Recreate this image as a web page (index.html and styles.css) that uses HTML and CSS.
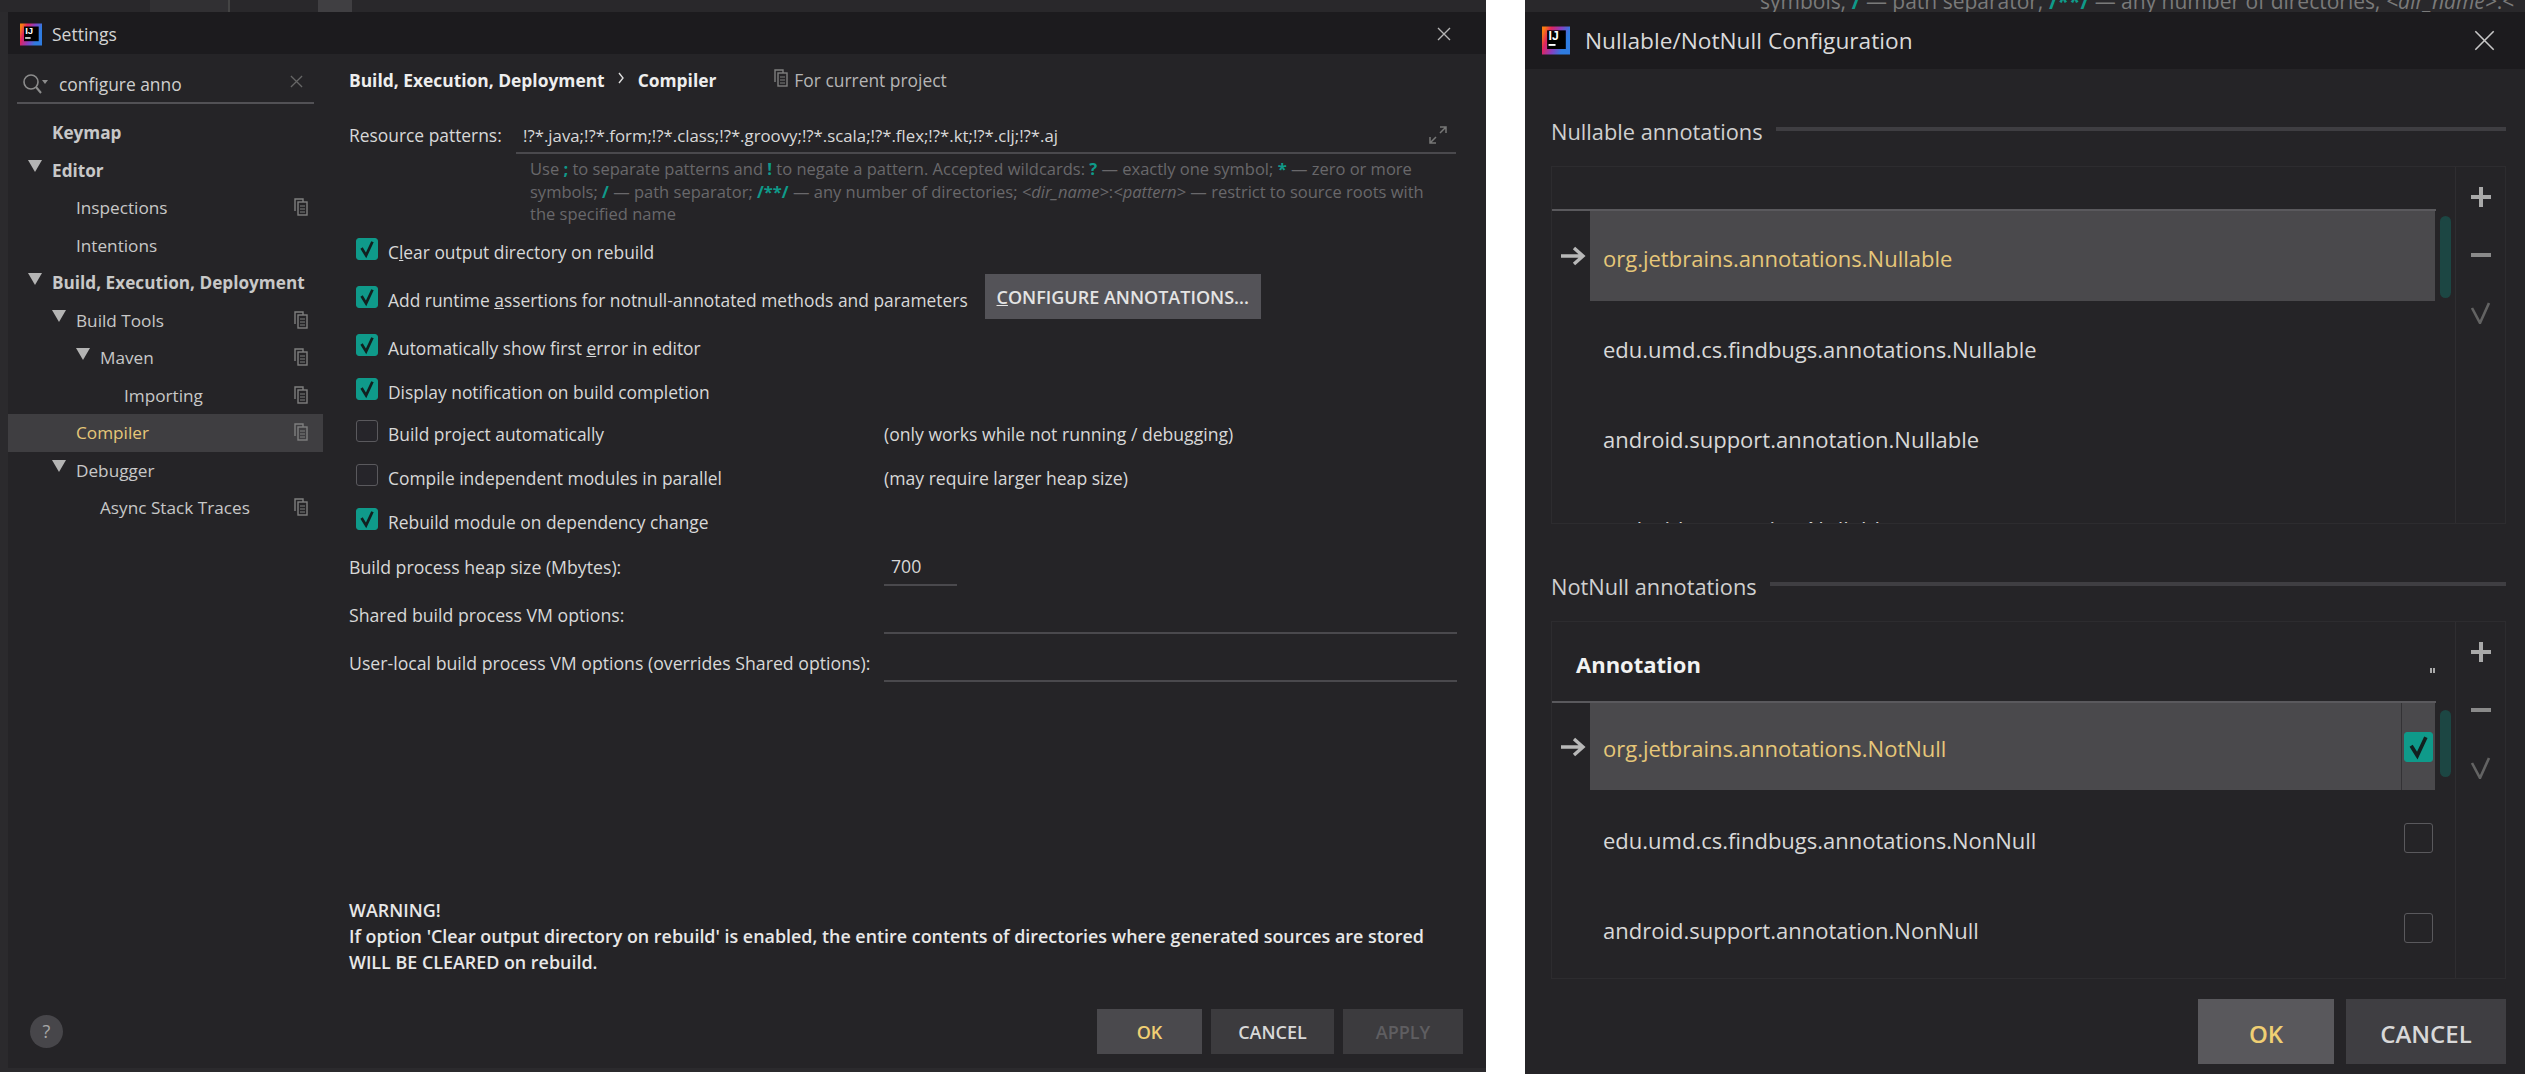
FILE: index.html
```html
<!DOCTYPE html>
<html>
  <head>
    <title>Settings</title>
    <link rel="stylesheet" href="styles.css">
  </head>
  <body>
    <svg class="defs" width="0" height="0">
      <defs>
        <linearGradient id="ijGrad" x1="0" y1="0.3" x2="1" y2="0.7">
          <stop offset="0" stop-color="#f97a12" />
          <stop offset="0.2" stop-color="#e0245e" />
          <stop offset="0.5" stop-color="#8a3fc0" />
          <stop offset="0.8" stop-color="#2f7ce0" />
        </linearGradient>
        <symbol id="ij" viewBox="0 0 24 24">
          <rect width="24" height="24" fill="url(#ijGrad)" />
          <rect x="4.4" y="3.3" width="16" height="16" fill="#000" />
          <text x="5.6" y="11.4" font-family="Liberation Sans" font-weight="bold" font-size="10.5" fill="#fff">IJ</text>
          <rect x="5.6" y="15" width="6" height="1.6" fill="#fff" />
        </symbol>
        <symbol id="copy" viewBox="0 0 14 18">
          <path d="M1 13V1h8v3" fill="none" stroke="#7f7f7f" stroke-width="1.4" />
          <rect x="4" y="4" width="9" height="13" fill="none" stroke="#7f7f7f" stroke-width="1.4" />
          <path d="M6 8h5M6 11h5M6 14h5" stroke="#7f7f7f" stroke-width="1.2" />
        </symbol>
        <symbol id="tri" viewBox="0 0 14 12">
          <path d="M0 0h14L7 12z" fill="#b4b4b4" />
        </symbol>
        <symbol id="arrow" viewBox="0 0 26 20">
          <path d="M1 10h21M14 2l9 8-9 8" fill="none" stroke="#b8b8b8" stroke-width="3.4" />
        </symbol>
        <symbol id="tick" viewBox="0 0 22 22">
          <path d="M5 10l5 8 7-15" fill="none" stroke="#12201f" stroke-width="3" />
        </symbol>
      </defs>
    </svg>

    <div class="window settings">
      <div class="behind behind-left"><span class="seg seg-a"></span><span class="seg seg-b"></span></div>
      <div class="titlebar">
        <svg class="logo"><use href="#ij" /></svg>
        <span class="title-text">Settings</span>
        <svg class="close" viewBox="0 0 16 16"><path d="M2 2l12 12M14 2L2 14" stroke="#b5b5b5" stroke-width="1.4" /></svg>
      </div>

      <div class="settings-body">
        <div class="sidebar">
          <div class="search">
            <svg class="search-icon" viewBox="0 0 26 22">
              <circle cx="9" cy="9" r="7" fill="none" stroke="#8c8c8c" stroke-width="1.6" />
              <path d="M14 14l5 6" stroke="#8c8c8c" stroke-width="2" />
              <path d="M20 7h6l-3 4z" fill="#8c8c8c" />
            </svg>
            <span class="search-text">configure anno</span>
            <svg class="search-clear" viewBox="0 0 14 14"><path d="M1 1l12 12M13 1L1 13" stroke="#666" stroke-width="1.4" /></svg>
          </div>
          <ul class="tree">
            <li class="node lvl1 strong">Keymap</li>
            <li class="node lvl1 strong"><svg class="tri"><use href="#tri" /></svg>Editor</li>
            <li class="node lvl2">Inspections<svg class="copy"><use href="#copy" /></svg></li>
            <li class="node lvl2">Intentions</li>
            <li class="node lvl1 strong"><svg class="tri"><use href="#tri" /></svg>Build, Execution, Deployment</li>
            <li class="node lvl2"><svg class="tri"><use href="#tri" /></svg>Build Tools<svg class="copy"><use href="#copy" /></svg></li>
            <li class="node lvl3"><svg class="tri"><use href="#tri" /></svg>Maven<svg class="copy"><use href="#copy" /></svg></li>
            <li class="node lvl4">Importing<svg class="copy"><use href="#copy" /></svg></li>
            <li class="node lvl2 active">Compiler<svg class="copy"><use href="#copy" /></svg></li>
            <li class="node lvl2"><svg class="tri"><use href="#tri" /></svg>Debugger</li>
            <li class="node lvl3">Async Stack Traces<svg class="copy"><use href="#copy" /></svg></li>
          </ul>
        </div>

        <div class="main">
          <div class="crumbs">
            <b>Build, Execution, Deployment</b>
            <svg class="chevron" viewBox="0 0 8 12"><path d="M2 1l4 5-4 5" fill="none" stroke="#ddd" stroke-width="1.4" /></svg>
            <b>Compiler</b>
            <svg class="copy crumb-copy"><use href="#copy" /></svg>
            <span class="scope">For current project</span>
          </div>

          <div class="resource">
            <span class="resource-label">Resource patterns:</span>
            <div class="resource-input">
              <span>!?*.java;!?*.form;!?*.class;!?*.groovy;!?*.scala;!?*.flex;!?*.kt;!?*.clj;!?*.aj</span>
              <svg class="expand" viewBox="0 0 18 18">
                <path d="M11 1h6v6M17 1l-6 6" fill="none" stroke="#777" stroke-width="1.5" />
                <path d="M1 11v6h6M1 17l6-6" fill="none" stroke="#777" stroke-width="1.5" />
              </svg>
            </div>
          </div>
          <p class="hint">
            Use <em class="key">;</em> to separate patterns and <em class="key">!</em> to negate a pattern. Accepted wildcards: <em class="key">?</em> — exactly one symbol; <em class="key">*</em> — zero or more symbols; <em class="key">/</em> — path separator; <em class="key">/**/</em> — any number of directories; <i>&lt;dir_name&gt;</i>:<i>&lt;pattern&gt;</i> — restrict to source roots with the specified name
          </p>

          <div class="checks">
            <label class="check h48 wide"><span class="box on"><svg><use href="#tick" /></svg></span><span>C<u>l</u>ear output directory on rebuild</span></label>
            <div class="check h48 wide">
              <span class="box on"><svg><use href="#tick" /></svg></span>
              <span>Add runtime <u>a</u>ssertions for notnull-annotated methods and parameters</span>
              <button class="btn configure"><u>C</u>ONFIGURE ANNOTATIONS...</button>
            </div>
            <label class="check h44 wide"><span class="box on"><svg><use href="#tick" /></svg></span><span>Automatically show first <u>e</u>rror in editor</span></label>
            <label class="check h42 wide"><span class="box on"><svg><use href="#tick" /></svg></span><span>Display notification on build completion</span></label>
            <label class="check h44"><span class="box"></span><span>Build project automatically</span></label>
            <span class="note h44">(only works while not running / debugging)</span>
            <label class="check h44"><span class="box"></span><span>Compile independent modules in parallel</span></label>
            <span class="note h44">(may require larger heap size)</span>
            <label class="check wide"><span class="box on"><svg><use href="#tick" /></svg></span><span>Rebuild module on dependency change</span></label>
          </div>

          <div class="form">
            <span class="form-label">Build process heap size (Mbytes):</span>
            <div class="field small">700</div>
            <span class="form-label">Shared build process VM options:</span>
            <div class="field"></div>
            <span class="form-label">User-local build process VM options (overrides Shared options):</span>
            <div class="field"></div>
          </div>

          <div class="warning">
            WARNING!<br />
            If option 'Clear output directory on rebuild' is enabled, the entire contents of directories where generated sources are stored<br />
            WILL BE CLEARED on rebuild.
          </div>
        </div>
      </div>

      <div class="footer">
        <span class="help">?</span>
        <div class="footer-btns">
          <button class="btn ok">OK</button>
          <button class="btn cancel">CANCEL</button>
          <button class="btn apply">APPLY</button>
        </div>
      </div>
    </div>

    <div class="window nullable">
      <div class="behind behind-right">
        <span>symbols; <em class="key">/</em> — path separator; <em class="key">/**/</em> — any number of directories; <i>&lt;dir_name&gt;</i>:&lt;</span>
      </div>
      <div class="titlebar big">
        <svg class="logo big-logo"><use href="#ij" /></svg>
        <span class="title-text">Nullable/NotNull Configuration</span>
        <svg class="close big-close" viewBox="0 0 16 16"><path d="M1 1l14 14M15 1L1 15" stroke="#c8c8c8" stroke-width="1.2" /></svg>
      </div>

      <div class="section-head"><span>Nullable annotations</span><i class="rule"></i></div>
      <div class="table">
        <div class="table-main">
          <div class="table-header"></div>
          <div class="row sel r90">
            <svg class="row-arrow"><use href="#arrow" /></svg>
            <div class="cell">org.jetbrains.annotations.Nullable</div>
          </div>
          <div class="row r92"><div class="cell">edu.umd.cs.findbugs.annotations.Nullable</div></div>
          <div class="row r88"><div class="cell">android.support.annotation.Nullable</div></div>
          <div class="row r92"><div class="cell">android.annotation.Nullable</div></div>
          <span class="thumb thumb-a"></span>
        </div>
        <div class="tools">
          <svg viewBox="0 0 22 22"><path d="M11 1v20M1 11h20" stroke="#a9a9a9" stroke-width="4" /></svg>
          <svg viewBox="0 0 22 22"><path d="M1 11h20" stroke="#8a8a8a" stroke-width="4" /></svg>
          <svg viewBox="0 0 22 22"><path d="M2 6l8 15 9-20" fill="none" stroke="#636363" stroke-width="2.6" /></svg>
        </div>
      </div>

      <div class="section-head"><span>NotNull annotations</span><i class="rule"></i></div>
      <div class="table">
        <div class="table-main">
          <div class="table-header tall">
            <b>Annotation</b>
            <span class="resize"></span>
          </div>
          <div class="row sel r87">
            <svg class="row-arrow"><use href="#arrow" /></svg>
            <div class="cell">
              org.jetbrains.annotations.NotNull
              <span class="cell-check line"><span class="box wide-box on"><svg><use href="#tick" /></svg></span></span>
            </div>
          </div>
          <div class="row r96"><div class="cell">edu.umd.cs.findbugs.annotations.NonNull<span class="cell-check"><span class="box wide-box"></span></span></div></div>
          <div class="row r84"><div class="cell">android.support.annotation.NonNull<span class="cell-check"><span class="box wide-box"></span></span></div></div>
          <span class="thumb thumb-b"></span>
        </div>
        <div class="tools">
          <svg viewBox="0 0 22 22"><path d="M11 1v20M1 11h20" stroke="#a9a9a9" stroke-width="4" /></svg>
          <svg viewBox="0 0 22 22"><path d="M1 11h20" stroke="#8a8a8a" stroke-width="4" /></svg>
          <svg viewBox="0 0 22 22"><path d="M2 6l8 15 9-20" fill="none" stroke="#636363" stroke-width="2.6" /></svg>
        </div>
      </div>

      <div class="big-footer">
        <button class="btn big-btn ok ok-big">OK</button>
        <button class="btn big-btn cancel-big">CANCEL</button>
      </div>
    </div>
  </body>
</html>
```

FILE: styles.css
```css
* {
  box-sizing: border-box;
}

body {
  margin: 0;
  width: 2525px;
  height: 1079px;
  overflow: hidden;
  background-color: #ffffff;
  display: flex;
  font-family: "Open Sans", "Noto Sans", sans-serif;
  font-size: 17.4px;
  color: #d8d8d8;
}

.defs {
  position: absolute;
}

ul {
  list-style: none;
  margin: 0;
  padding: 0;
}

p {
  margin: 0;
}

.window {
  display: flex;
  flex-direction: column;
  background-color: #252427;
}

/* left window */
.settings {
  width: 1486px;
  height: 1072px;
  margin-right: 39px;
  border-left: 8px solid #2b2a2d;
  border-bottom: 4px solid #2b2a2d;
}

.behind {
  height: 12px;
  flex: none;
  overflow: hidden;
  background-color: #29282b;
}

.behind-left {
  display: flex;
  margin-left: -8px;
}

.seg {
  display: block;
  height: 12px;
}

.seg-a {
  width: 80px;
  margin-left: 150px;
  background-color: #313033;
  border-right: 2px solid #444;
}

.seg-b {
  width: 34px;
  margin-left: 88px;
  background-color: #403f42;
}

.behind-right {
  padding-left: 235px;
  font-size: 21px;
  line-height: 2px;
  color: #7a7a7a;
  white-space: nowrap;
}

.titlebar {
  height: 42px;
  flex: none;
  display: flex;
  align-items: center;
  padding: 2px 34px 0 12px;
  background-color: #1c1b1e;
  font-size: 17.5px;
  color: #d4d4d4;
}

.logo {
  width: 22px;
  height: 23px;
  margin-right: 10px;
}

.close {
  width: 16px;
  height: 16px;
  margin-left: auto;
}

.settings-body {
  flex: 1;
  min-height: 0;
  display: flex;
}

.sidebar {
  width: 315px;
  flex: none;
}

.search {
  height: 38px;
  width: 297px;
  margin: 12px 0 10px 9px;
  display: flex;
  align-items: center;
  border-bottom: 2px solid #525155;
  padding: 0 11px 0 5px;
}

.search-icon {
  width: 26px;
  height: 22px;
  margin-right: 11px;
}

.search-text {
  font-size: 17.4px;
  color: #cfcfcf;
}

.search-clear {
  width: 13px;
  height: 13px;
  margin-left: auto;
  margin-bottom: 6px;
}

.node {
  height: 37.5px;
  display: flex;
  align-items: center;
  position: relative;
  font-size: 17.2px;
  color: #c8c8c8;
}

.strong {
  font-weight: 700;
}

.lvl1 {
  padding-left: 44px;
}

.lvl2 {
  padding-left: 68px;
}

.lvl3 {
  padding-left: 92px;
}

.lvl4 {
  padding-left: 116px;
}

.tri {
  width: 14px;
  height: 12px;
  margin-left: -24px;
  margin-right: 10px;
  margin-bottom: 8px;
}

.copy {
  width: 14px;
  height: 18px;
}

.node .copy {
  position: absolute;
  left: 286px;
  top: 9px;
}

.active {
  background-color: #3f3e41;
  color: #e6c779;
}

.main {
  flex: 1;
  min-width: 0;
  padding: 12px 30px 22px 26px;
  display: flex;
  flex-direction: column;
}

.crumbs {
  height: 28px;
  display: flex;
  align-items: center;
  color: #eeeeee;
  white-space: nowrap;
}

.chevron {
  width: 8px;
  height: 12px;
  margin: 0 13px 4px 12px;
}

.crumb-copy {
  margin: 0 6px 4px 58px;
}

.scope {
  color: #b5b5b5;
}

.resource {
  display: flex;
  height: 36px;
  margin-top: 24px;
}

.resource-label {
  width: 167px;
  flex: none;
  line-height: 34px;
}

.resource-input {
  flex: 1;
  display: flex;
  align-items: center;
  justify-content: space-between;
  padding: 0 9px 0 7px;
  border-bottom: 2px solid #4a494d;
  font-size: 16.8px;
}

.expand {
  width: 18px;
  height: 18px;
}

.hint {
  margin: 4px 20px 0 181px;
  font-size: 16.5px;
  line-height: 22.5px;
  color: #69686b;
}

.hint .key,
.behind .key {
  font-style: normal;
  font-weight: 700;
  color: #0f9a8a;
}

.checks {
  margin-top: 11.5px;
  display: grid;
  grid-template-columns: 535px 1fr;
  align-items: start;
}

.check {
  height: 30px;
  display: flex;
  align-items: center;
  white-space: nowrap;
}

.wide {
  grid-column: 1 / 3;
}

.h48 {
  margin-bottom: 18px;
}

.h44 {
  margin-bottom: 14px;
}

.h42 {
  margin-bottom: 12px;
}

.note {
  height: 30px;
  line-height: 30px;
  font-size: 17.6px;
}

.box {
  width: 22px;
  height: 22px;
  flex: none;
  margin: 0 10px 6px 7px;
  border: 1px solid #5a595d;
  border-radius: 3px;
  background-color: #26252a;
}

.box.on {
  background-color: #0f9a8a;
  border-color: #0f9a8a;
}

.box svg {
  display: block;
  width: 20px;
  height: 20px;
}

.btn {
  border: none;
  padding: 0;
  font-family: inherit;
  background-color: #3c3b3e;
  color: #d8d8d8;
  font-size: 18px;
  font-weight: 600;
}

.configure {
  width: 276px;
  height: 45px;
  margin: 0 0 7px 17px;
  background-color: #545358;
  color: #e4e4e4;
}

.form {
  margin-top: 12px;
  display: grid;
  grid-template-columns: 535px 1fr;
  grid-auto-rows: 36px;
  row-gap: 12px;
  font-size: 17.7px;
}

.form-label {
  line-height: 36px;
  white-space: nowrap;
}

.field {
  height: 37px;
  padding-left: 7px;
  line-height: 35px;
  border-bottom: 2px solid #4a494d;
  margin-right: -1px;
}

.field.small {
  width: 73px;
}

.warning {
  margin-top: auto;
  font-size: 17.9px;
  font-weight: 600;
  line-height: 26px;
  color: #e8e8e8;
  white-space: nowrap;
}

.footer {
  flex: none;
  height: 45px;
  margin: 12px 0 14px;
  padding: 0 23px 0 22px;
  display: flex;
  align-items: center;
  justify-content: space-between;
}

.help {
  width: 33px;
  height: 33px;
  border-radius: 50%;
  background-color: #47464a;
  color: #a8a8a8;
  text-align: center;
  line-height: 33px;
  font-size: 18px;
}

.footer-btns {
  display: flex;
  gap: 9px;
}

.footer-btns .btn {
  height: 45px;
}

.ok {
  width: 105px;
  background-color: #4a494d;
  color: #f0cf73;
}

.cancel {
  width: 123px;
}

.apply {
  width: 120px;
  color: #5f5e61;
}

/* right window */
.nullable {
  width: 1000px;
  height: 1074px;
  padding: 0 19px 0 26px;
}

.behind-right,
.big {
  margin: 0 -19px 0 -26px;
}

.big {
  height: 57px;
  padding: 0 30px 0 17px;
  font-size: 22.7px;
  color: #dadada;
}

.big-logo {
  width: 28px;
  height: 31px;
  margin-right: 15px;
}

.big-close {
  width: 21px;
  height: 21px;
}

.section-head {
  height: 30px;
  margin-top: 47px;
  flex: none;
  display: flex;
  align-items: center;
  gap: 13px;
  font-size: 21.8px;
  color: #d0d0d0;
  white-space: nowrap;
}

.rule {
  flex: 1;
  height: 4px;
  margin-bottom: 4px;
  background-color: #3f3e42;
}

.table {
  height: 358px;
  margin-top: 20px;
  flex: none;
  display: flex;
  border: 1px solid #2d2c2f;
}

.table-main {
  width: 904px;
  flex: none;
  position: relative;
  overflow: hidden;
  border-right: 1px solid #2f2e31;
}

.table-header {
  height: 44px;
  width: 884px;
  border-bottom: 2px solid #5a595d;
}

.table-header.tall {
  height: 81px;
  padding: 4px 0 0 24px;
  display: flex;
  align-items: center;
  font-size: 22px;
  color: #f2f2f2;
}

.resize {
  width: 5px;
  height: 5px;
  margin: 14px 1px 0 auto;
  border-left: 2px solid #aaa;
  border-right: 2px solid #aaa;
}

.row {
  display: flex;
  width: 883px;
  align-items: center;
  padding-left: 38px;
  position: relative;
}

.r84 { height: 84px; }
.r87 { height: 87px; }
.r88 { height: 88px; }
.r90 { height: 90px; }
.r92 { height: 92px; }
.r96 { height: 96px; }

.row-arrow {
  position: absolute;
  left: 8px;
  top: calc(50% - 10px);
  width: 26px;
  height: 20px;
}

.cell {
  flex: 1;
  height: 100%;
  display: flex;
  align-items: center;
  padding: 3px 0 0 13px;
  font-size: 22px;
  color: #d8d8d8;
  position: relative;
}

.sel .cell {
  background-color: #4a494c;
  color: #e6c779;
}

.cell-check {
  position: absolute;
  right: 0;
  top: 0;
  bottom: 0;
  width: 34px;
  display: flex;
  align-items: center;
  justify-content: center;
}

.cell-check.line {
  border-left: 1px solid #333235;
}

.wide-box {
  width: 29px;
  height: 30px;
  margin: 0;
  background: transparent;
}

.wide-box svg {
  width: 27px;
  height: 28px;
}

.thumb {
  position: absolute;
  left: 888px;
  width: 11px;
  border-radius: 6px;
  background-color: #1c4643;
}

.thumb-a {
  top: 49px;
  height: 82px;
}

.thumb-b {
  top: 88px;
  height: 67px;
}

.tools {
  flex: 1;
  display: flex;
  flex-direction: column;
  align-items: center;
  padding-top: 19px;
  gap: 36px;
}

.tools svg {
  width: 22px;
  height: 22px;
}

.big-footer {
  margin-top: 20px;
  display: flex;
  justify-content: flex-end;
  gap: 12px;
}

.big-btn {
  height: 65px;
  padding-top: 4px;
  font-size: 24px;
}

.ok-big {
  width: 136px;
  background-color: #59585c;
}

.cancel-big {
  width: 160px;
  background-color: #3f3e42;
}
```
